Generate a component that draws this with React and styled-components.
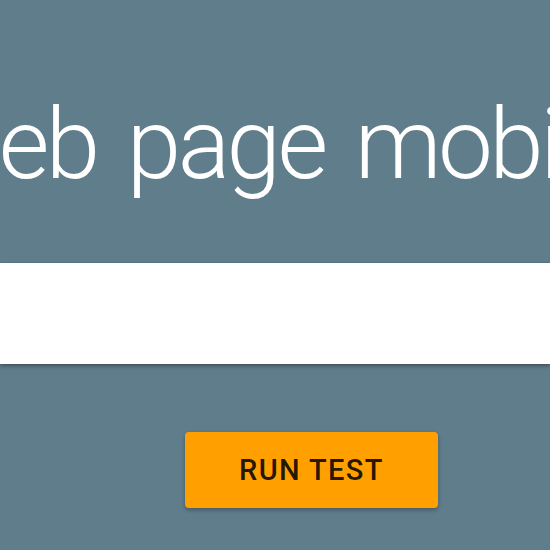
import React from 'react';
import styled, { createGlobalStyle } from 'styled-components';

const GlobalStyle = createGlobalStyle`
  html, body {
    margin: 0;
    padding: 0;
    background: #607d8b;
    overflow: hidden;
  }
  body {
    font-family: Roboto, "Liberation Sans", sans-serif;
  }
`;

const Hero = styled.section`
  width: 550px;
  height: 550px;
  overflow: hidden;
  background: #607d8b;
  display: flex;
  flex-direction: column;
  align-items: stretch;
`;

const Title = styled.h1`
  margin: 86px 0 0 -374px;
  font-family: Roboto, "Liberation Sans", sans-serif;
  font-weight: 300;
  font-size: 98px;
  line-height: 118px;
  letter-spacing: -3.6px;
  word-spacing: 10px;
  color: #fff;
  white-space: nowrap;
`;

const UrlInput = styled.input`
  box-sizing: border-box;
  margin-top: 59px;
  width: 100%;
  height: 101px;
  border: none;
  outline: none;
  background: #fff;
  padding: 0 24px;
  font-family: Roboto, "Liberation Sans", sans-serif;
  font-size: 32px;
  box-shadow: 0 2px 4px rgba(0, 0, 0, 0.35), 0 0 1px rgba(0, 0, 0, 0.2);
`;

const Actions = styled.div`
  display: flex;
  justify-content: flex-start;
  padding: 68px 0 0 185px;
`;

const RunButton = styled.button`
  width: 253px;
  height: 76px;
  border: none;
  border-radius: 4px;
  background: #ffa000;
  color: rgba(0, 0, 0, 0.87);
  font-family: Roboto, "Liberation Sans", sans-serif;
  font-weight: 500;
  font-size: 29px;
  letter-spacing: 1.4px;
  text-transform: uppercase;
  cursor: pointer;
  box-shadow: 0 2px 4px rgba(0, 0, 0, 0.3);
`;

export default function App() {
  return (
    <>
      <GlobalStyle />
      <Hero>
        <Title>Is your web page mobile-friendly?</Title>
        <UrlInput type="url" aria-label="Enter a URL to test" />
        <Actions>
          <RunButton>Run test</RunButton>
        </Actions>
      </Hero>
    </>
  );
}
